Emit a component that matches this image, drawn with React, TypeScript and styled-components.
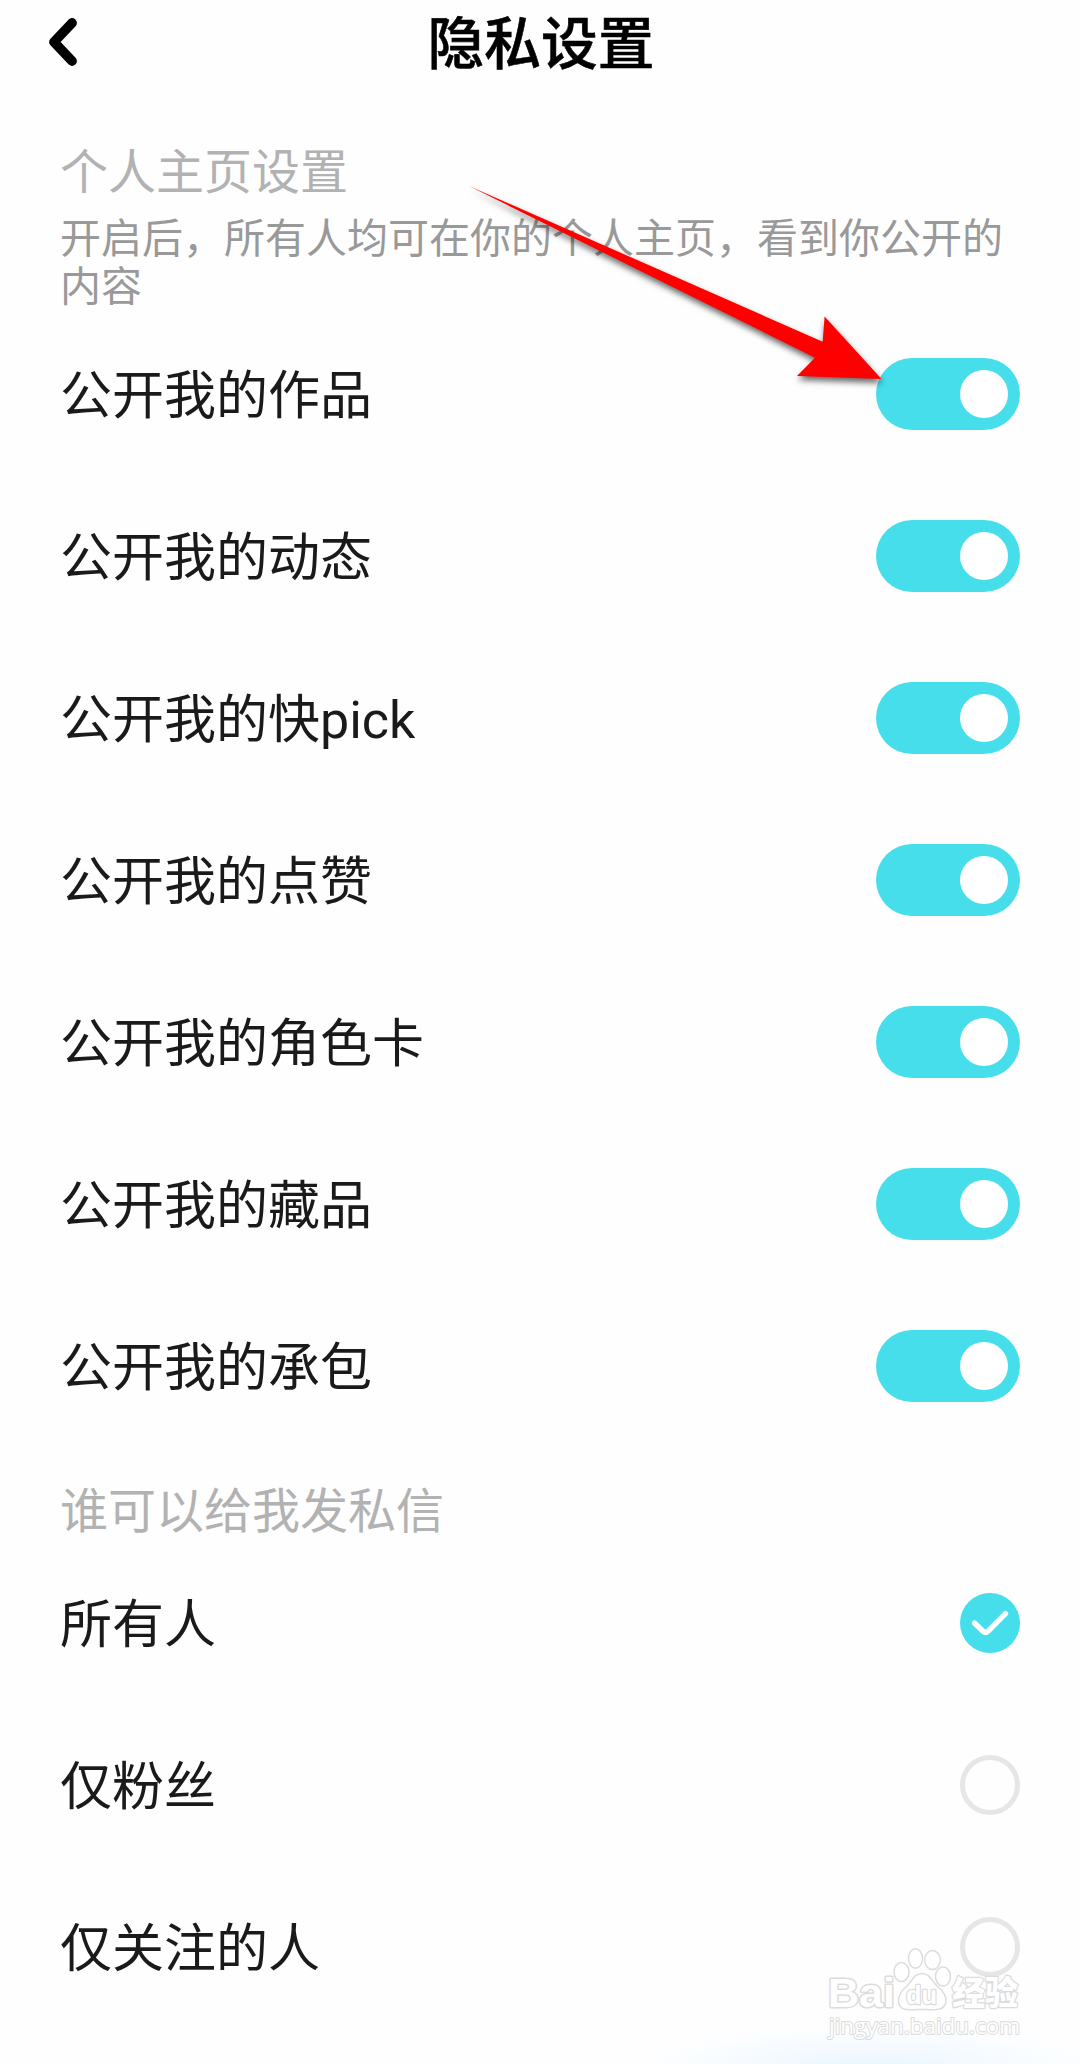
import React, { useState } from 'react';
import styled, { createGlobalStyle } from 'styled-components';

const GlobalStyle = createGlobalStyle`
  * { box-sizing: border-box; }
  body {
    margin: 0;
    background: #fefefe;
    font-family: Roboto, "Noto Sans CJK SC", sans-serif;
  }
`;

const Page = styled.main`
  position: relative;
  width: 1080px;
  height: 2064px;
  overflow: hidden;
  background: radial-gradient(ellipse 240px 48px at 870px 2070px, #e8f4ff 0%, #f3f9ff 40%, #fafdff 75%, #fefefe 100%);
`;

const Header = styled.header`
  display: grid;
  grid-template-columns: 120px 1fr 120px;
  align-items: center;
  height: 88px;
`;

const BackButton = styled.button`
  display: flex;
  width: 40px;
  height: 60px;
  margin-left: 43px;
  padding: 0;
  border: 0;
  background: none;
`;

const Title = styled.h1`
  margin: 0;
  padding: 2px 0 0 2px;
  text-align: center;
  font-size: 56.7px;
  font-weight: 500;
  line-height: 84px;
  color: #000;
  -webkit-text-stroke: 0.6px #000;
`;

const Section = styled.section`
  padding: 0 60px;
`;

const SectionTitle = styled.h2<{ $top: number; $bottom: number }>`
  margin: 0;
  padding: ${(p) => p.$top}px 0 ${(p) => p.$bottom}px;
  font-size: 48px;
  font-weight: 400;
  line-height: 56px;
  color: #b2b2b2;
`;

const Hint = styled.p`
  margin: 0;
  height: 98px;
  font-size: 41px;
  line-height: 48px;
  color: #999;
`;

const Row = styled.div`
  display: flex;
  align-items: center;
  justify-content: space-between;
  height: 162px;
`;

const Label = styled.span`
  padding-top: 6px;
  font-size: 52px;
  line-height: 76px;
  color: #1a1a1a;
`;

const Switch = styled.button<{ $on: boolean }>`
  display: flex;
  align-items: center;
  justify-content: ${(p) => (p.$on ? 'flex-end' : 'flex-start')};
  width: 144px;
  height: 72px;
  padding: 0 12px;
  border: 0;
  border-radius: 36px;
  background: ${(p) => (p.$on ? '#46deeb' : '#e6e6e6')};
`;

const Knob = styled.span`
  width: 48px;
  height: 48px;
  border-radius: 50%;
  background: #fff;
`;

const Radio = styled.button<{ $on: boolean }>`
  display: flex;
  width: 60px;
  height: 60px;
  padding: 0;
  border: ${(p) => (p.$on ? '0' : '5px solid #e6e6e6')};
  border-radius: 50%;
  background: ${(p) => (p.$on ? '#46deeb' : 'transparent')};
`;

const Arrow = styled.svg`
  position: absolute;
  left: 460px;
  top: 176px;
  overflow: visible;
  filter: drop-shadow(1px 4px 3px rgba(0, 0, 0, 0.6));
  pointer-events: none;
`;

const Watermark = styled.svg`
  position: absolute;
  left: 820px;
  top: 1940px;
  pointer-events: none;
`;

const toggles = [
  '公开我的作品',
  '公开我的动态',
  '公开我的快pick',
  '公开我的点赞',
  '公开我的角色卡',
  '公开我的藏品',
  '公开我的承包',
];

const audiences = ['所有人', '仅粉丝', '仅关注的人'];

export default function App() {
  const [on, setOn] = useState(toggles.map(() => true));
  const [audience, setAudience] = useState(0);

  return (
    <Page>
      <GlobalStyle />
      <Header>
        <BackButton aria-label="返回">
          <svg width="40" height="60" viewBox="43 14 40 60">
            <path d="M72 23 L54 42 L72 61" fill="none" stroke="#000" strokeWidth="9.8" strokeLinecap="round" strokeLinejoin="round" />
          </svg>
        </BackButton>
        <Title>隐私设置</Title>
      </Header>

      <Section>
        <SectionTitle $top={57} $bottom={14}>个人主页设置</SectionTitle>
        <Hint>开启后，所有人均可在你的个人主页，看到你公开的内容</Hint>
        {toggles.map((name, i) => (
          <Row key={name}>
            <Label>{name}</Label>
            <Switch
              $on={on[i]}
              role="switch"
              aria-checked={on[i]}
              onClick={() => setOn(on.map((v, j) => (j === i ? !v : v)))}
            >
              <Knob />
            </Switch>
          </Row>
        ))}
      </Section>

      <Section>
        <SectionTitle $top={37} $bottom={2}>谁可以给我发私信</SectionTitle>
        {audiences.map((name, i) => (
          <Row key={name}>
            <Label>{name}</Label>
            <Radio $on={audience === i} role="radio" aria-checked={audience === i} onClick={() => setAudience(i)}>
              {audience === i && (
                <svg width="60" height="60" viewBox="0 0 60 60">
                  <path d="M14.5 30 L23 38.2 Q25.5 40.5 28 38.2 L45.5 20.7" fill="none" stroke="#fff" strokeWidth="5.4" strokeLinecap="round" />
                </svg>
              )}
            </Radio>
          </Row>
        ))}
      </Section>

      <Arrow width="430" height="210" viewBox="460 176 430 210">
        <path d="M469 186 L822.7 341.7 L824.6 316.5 L881.5 379 L797 376 L815 357.7 Z" fill="#f00" />
      </Arrow>

      <Watermark width="220" height="110" viewBox="820 1940 220 110">
        <g fill="#fff" stroke="#dcdcdc" strokeWidth="2" strokeLinejoin="round">
          <text x="828" y="2007" fontFamily="Liberation Sans, sans-serif" fontWeight="700" fontSize="41" strokeWidth="3" textLength="67" lengthAdjust="spacingAndGlyphs" paintOrder="stroke">Bai</text>
          <ellipse cx="901.5" cy="1972" rx="7.5" ry="9.5" strokeWidth="1.5" />
          <ellipse cx="915.5" cy="1958.5" rx="7" ry="9.8" strokeWidth="1.5" />
          <ellipse cx="932.5" cy="1960" rx="7.8" ry="9.5" strokeWidth="1.5" />
          <ellipse cx="943" cy="1976.5" rx="7.5" ry="9.5" strokeWidth="1.5" />
          <path strokeWidth="1.5" d="M922 1973.5 C930 1973.5 932 1981 937 1986 C943 1991 947 1996 946 2002 C944 2011 936 2010 922 2009.5 C908 2010 900 2011 898.5 2002 C898 1995 902 1990 907 1986 C912 1981 914 1973.5 922 1973.5 Z" />
          <text x="906" y="2003.5" fontFamily="Liberation Sans, sans-serif" fontSize="26" fontWeight="700" strokeWidth="2.5" textLength="31" lengthAdjust="spacingAndGlyphs" paintOrder="stroke">du</text>
          <text x="952" y="2004.5" fontFamily="Noto Sans CJK SC, sans-serif" fontWeight="900" fontSize="33" strokeWidth="2.5" paintOrder="stroke">经验</text>
          <text x="829" y="2034" fontFamily="Open Sans, sans-serif" fontSize="22.5" textLength="191" lengthAdjust="spacingAndGlyphs" paintOrder="stroke">jingyan.baidu.com</text>
        </g>
      </Watermark>
    </Page>
  );
}
